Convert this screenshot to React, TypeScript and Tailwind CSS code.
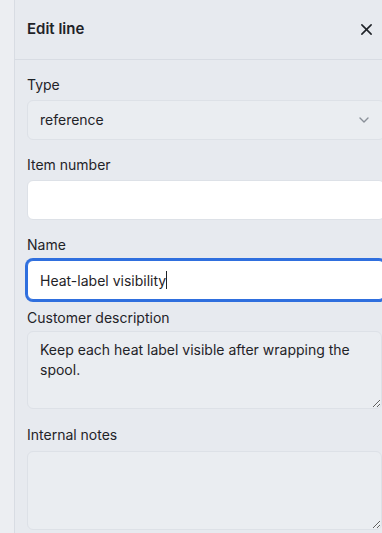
import React, { useState } from 'react';

const font = { fontFamily: 'Inter, "Noto Sans", sans-serif' };

function Label({ children, className = '' }: { children: React.ReactNode; className?: string }) {
  return <label className={`block text-sm leading-5 text-[#1f2328] ${className}`}>{children}</label>;
}

export default function App() {
  const [name, setName] = useState('Heat-label visibility');
  const [desc, setDesc] = useState('Keep each heat label visible after wrapping the spool.');

  return (
    <div className="flex h-[533px] w-[382px] overflow-hidden bg-[#eceef2]" style={font}>
      <div className="w-[14px] shrink-0" />
      <div className="flex min-w-0 flex-1 flex-col border-l border-[#d8dce3] bg-[#e7eaef]">
        {/* Header */}
        <div className="flex h-[60px] shrink-0 items-center justify-between border-b border-[#d8dce3] pl-3 pr-[4px]">
          <h2 className="text-[15px] font-semibold text-[#1f2328]">Edit line</h2>
          <button className="flex h-6 w-6 items-center justify-center text-[#1f2328]">
            <svg width="13" height="13" viewBox="0 0 14 14" fill="none" stroke="currentColor" strokeWidth="1.7" strokeLinecap="round">
              <path d="M2 2l10 10M12 2L2 12" />
            </svg>
          </button>
        </div>

        {/* Form */}
        <div className="w-[370px] shrink-0 pl-3 pt-[15px]">
          <Label>Type</Label>
          <div className="relative mt-[5px] flex h-10 items-center rounded-md border border-[#dde1e7] bg-[#eaedf1] pl-[12px]">
            <span className="text-sm text-[#1f2328]">reference</span>
            <svg className="absolute right-[14px] top-[15px]" width="12" height="8" viewBox="0 0 12 8" fill="none" stroke="#8a9099" strokeWidth="1.4" strokeLinecap="round" strokeLinejoin="round">
              <path d="M2 2l4 4 4-4" />
            </svg>
          </div>

          <Label className="mt-[15px]">Item number</Label>
          <input className="mt-[5px] block h-10 w-full rounded-md border border-[#dde1e7] bg-white px-3 text-sm outline-none" />

          <Label className="mt-[15px]">Name</Label>
          <div className="relative mt-[5px]">
            <input
              value={name}
              onChange={(e) => setName(e.target.value)}
              className="block h-10 w-full rounded-md border border-[#2f6fde] bg-white px-3 text-sm text-[#1f2328] outline-none ring-2 ring-[#2f6fde]"
            />
            {/* caret after text */}
            <span className="pointer-events-none absolute left-[139px] top-[11px] h-[18px] w-px bg-[#1f2328]" />
          </div>

          <Label className="mt-[8px]">Customer description</Label>
          <textarea
            value={desc}
            onChange={(e) => setDesc(e.target.value)}
            className="mt-[3px] block h-[78px] w-[355px] resize-y rounded-md border border-[#dde1e7] bg-[#eaedf1] px-3 pt-[8px] text-sm leading-5 text-[#1f2328] outline-none"
          />

          <Label className="mt-[16px]">Internal notes</Label>
          <textarea className="mt-[6px] block h-[79px] w-[355px] resize-y rounded-md border border-[#dde1e7] bg-[#eaedf1] px-3 pt-2 text-sm leading-5 outline-none" />
        </div>
      </div>
    </div>
  );
}
